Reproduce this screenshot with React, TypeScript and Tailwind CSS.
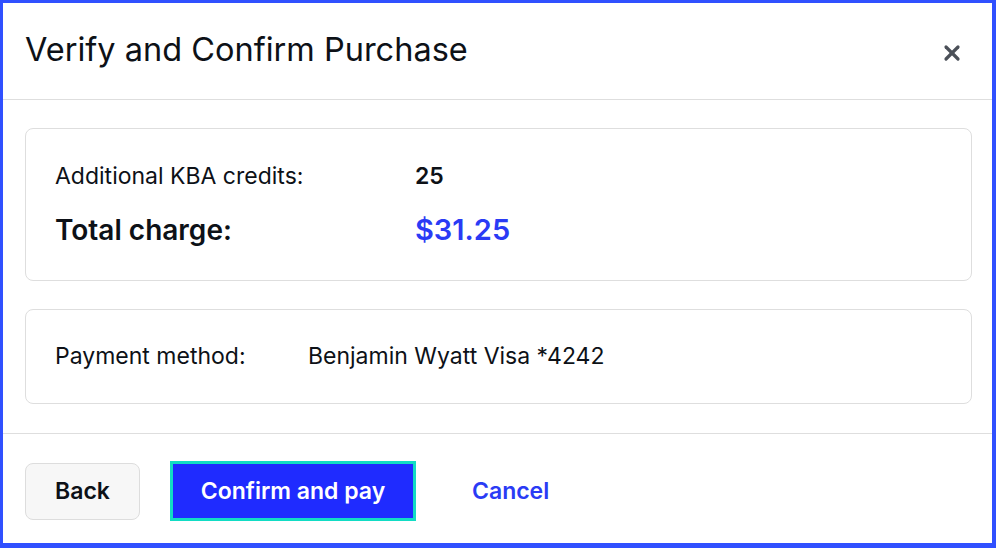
import { X } from 'lucide-react'

export default function App() {
  return (
    <div
      className="h-screen w-full bg-white border-[#3050ff] border-t-[3px] border-l-[3px] border-r-4 border-b-[5px] flex flex-col text-[#0d1117]"
      style={{ fontFamily: 'Inter, "Noto Sans", sans-serif' }}
    >
      <div className="h-[97px] shrink-0 flex items-center justify-between pl-[22px] pr-[28px] border-b border-[#dedede]">
        <h1 className="text-[32.5px] font-normal pb-[2px]">Verify and Confirm Purchase</h1>
        <button className="text-[#4b5058] pt-[3px]">
          <X size={24} strokeWidth={3.2} />
        </button>
      </div>

      <div className="h-[333px] shrink-0 pl-[22px] pr-[20px] pt-[28px] flex flex-col gap-[28px]">
        <div className="h-[153px] rounded-lg border border-[#dedede] px-[29px] pt-[32px]">
          <div className="flex items-center h-[30px] text-[23px]">
            <span className="w-[360px]">Additional KBA credits:</span>
            <span className="font-semibold">25</span>
          </div>
          <div className="flex items-center h-[36px] mt-[21px]">
            <span className="w-[360px] text-[28px] font-semibold">Total charge:</span>
            <span className="text-[29px] font-semibold text-[#2a3bf5]">$31.25</span>
          </div>
        </div>

        <div className="h-[95px] rounded-lg border border-[#dedede] px-[29px] flex items-center text-[23px]">
          <span className="w-[253px]">Payment method:</span>
          <span>Benjamin Wyatt Visa *4242</span>
        </div>
      </div>

      <div className="flex-1 border-t border-[#dedede] flex items-center pl-[22px] gap-[30px] pt-[5px]">
        <button className="h-[57px] w-[115px] rounded-lg bg-[#f7f7f7] border border-[#dddddd] text-[23px] font-semibold">
          Back
        </button>
        <button className="h-[60px] w-[246px] border-[3px] border-[#12dcc4] bg-[#1f2bff] text-white text-[23px] font-semibold">
          Confirm and pay
        </button>
        <button className="ml-[26px] text-[23px] font-semibold text-[#2a3bf5]">Cancel</button>
      </div>
    </div>
  )
}
